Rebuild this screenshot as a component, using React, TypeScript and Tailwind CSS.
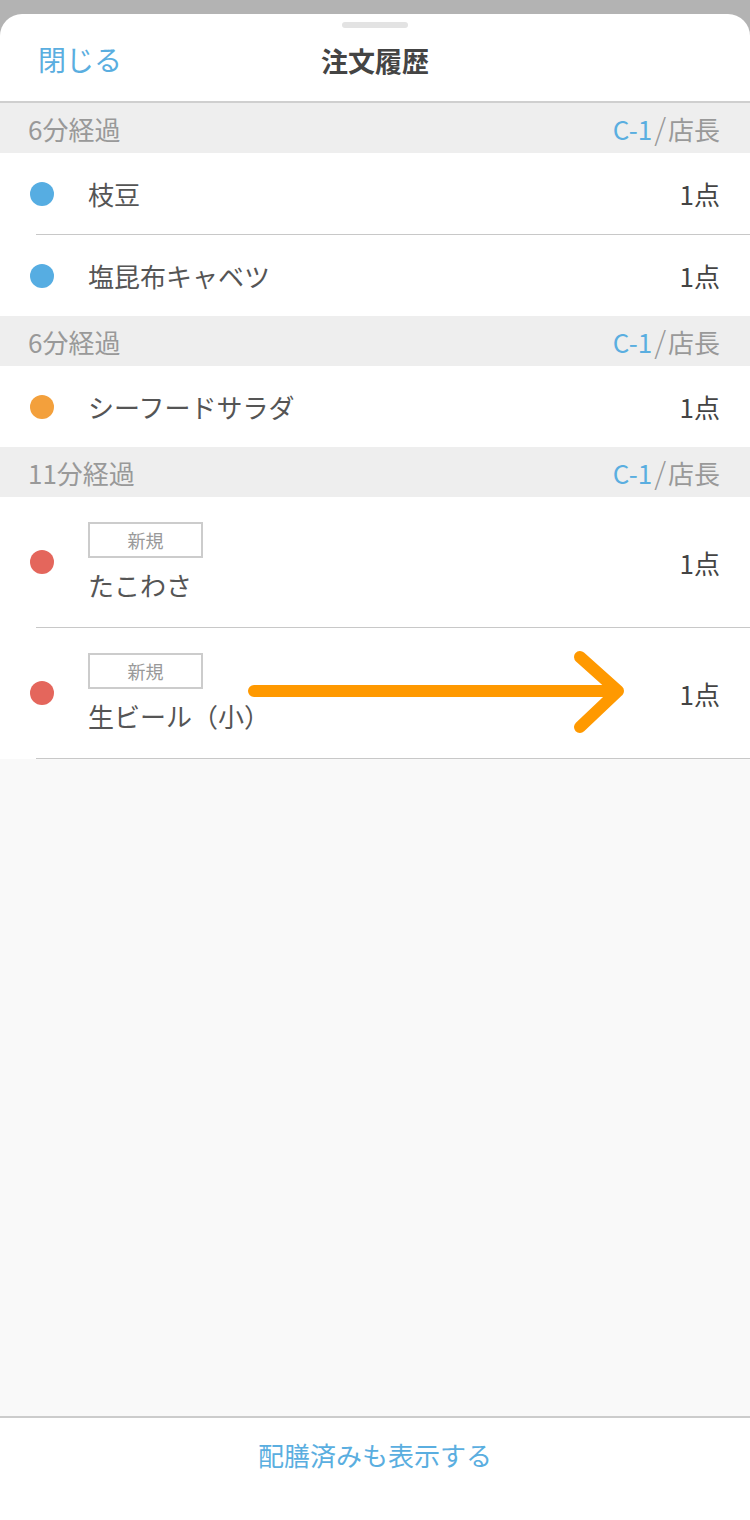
import React from 'react';

type Item = {
  name: string;
  color: string;
  isNew?: boolean;
  qty: string;
};

type Section = {
  elapsed: string;
  table: string;
  staff: string;
  items: Item[];
};

const sections: Section[] = [
  {
    elapsed: '6分経過',
    table: 'C-1',
    staff: '店長',
    items: [
      { name: '枝豆', color: 'bg-[#56ade2]', qty: '1点' },
      { name: '塩昆布キャベツ', color: 'bg-[#56ade2]', qty: '1点' },
    ],
  },
  {
    elapsed: '6分経過',
    table: 'C-1',
    staff: '店長',
    items: [{ name: 'シーフードサラダ', color: 'bg-[#f3a03c]', qty: '1点' }],
  },
  {
    elapsed: '11分経過',
    table: 'C-1',
    staff: '店長',
    items: [
      { name: 'たこわさ', color: 'bg-[#e4665c]', isNew: true, qty: '1点' },
      { name: '生ビール（小）', color: 'bg-[#e4665c]', isNew: true, qty: '1点' },
    ],
  },
];

const SectionHeader = ({ s }: { s: Section }) => (
  <div className="flex h-[50px] items-center justify-between bg-[#eeeeee] pl-[28px] pr-[30px]">
    <span className="text-[26px] text-[#999999]">{s.elapsed}</span>
    <span className="flex items-center text-[26px]">
      <span className="text-[#5aaee0]">{s.table}</span>
      <span className="mx-[2px] text-[30px] font-light text-[#999999]">/</span>
      <span className="text-[#999999]">{s.staff}</span>
    </span>
  </div>
);

const Row = ({ item }: { item: Item }) => (
  <div className={`flex items-center justify-between pl-[30px] pr-[30px] ${item.isNew ? 'h-[130px]' : 'h-[81px]'}`}>
    <div className="flex items-center">
      <span className={`h-[24px] w-[24px] rounded-full ${item.color}`} />
      <div className="ml-[34px] flex flex-col">
        {item.isNew && (
          <span className="mb-[10px] flex h-[36px] w-[115px] items-center justify-center border-2 border-[#cccccc] text-[18px] text-[#999999]">
            新規
          </span>
        )}
        <span className="text-[26px] leading-[34px] text-[#555555]">{item.name}</span>
      </div>
    </div>
    <span className="text-[26px] text-[#444444]">{item.qty}</span>
  </div>
);

export default function App() {
  return (
    <div
      className="relative flex h-[1520px] w-[750px] flex-col bg-[#b3b3b3]"
      style={{ fontFamily: '"Noto Sans CJK JP", "Noto Sans", sans-serif' }}
    >
      <div className="mt-[14px] flex flex-1 flex-col overflow-hidden rounded-t-[22px] bg-white">
        <div className="relative flex h-[89px] items-center justify-center border-b-2 border-[#cfcfcf]">
          <span className="absolute left-1/2 top-[8px] h-[6px] w-[66px] -translate-x-1/2 rounded-full bg-[#e3e3e3]" />
          <button className="absolute left-[38px] top-[31px] text-[28px] leading-none text-[#5aaee0]">閉じる</button>
          <h1 className="mt-[8px] text-[27px] font-bold text-[#444444]">注文履歴</h1>
        </div>

        <div className="flex flex-col">
          {sections.map((s, si) => (
            <div key={si} className="flex flex-col">
              <SectionHeader s={s} />
              {s.items.map((item, ii) => {
                const last = ii === s.items.length - 1;
                const showLine = !last || si === sections.length - 1;
                return (
                  <div key={ii} className="flex flex-col">
                    <Row item={item} />
                    {showLine && (
                      <div className="flex bg-white">
                        <div className="ml-[36px] h-px flex-1 bg-[#c8c8c8]" />
                      </div>
                    )}
                  </div>
                );
              })}
            </div>
          ))}
        </div>

        <div className="flex-1 bg-[#f9f9f9]" />

        <div className="flex h-[104px] items-center justify-center border-t-2 border-[#cccccc] bg-white pb-[30px]">
          <span className="text-[26px] text-[#5aaee0]">配膳済みも表示する</span>
        </div>
      </div>

      <svg
        className="absolute left-[240px] top-[645px]"
        width="400"
        height="95"
        viewBox="0 0 400 95"
        fill="none"
      >
        <path
          d="M14 46 H378 M340 12 L378 46 L340 82"
          stroke="#ff9900"
          strokeWidth="12"
          strokeLinecap="round"
          strokeLinejoin="round"
        />
      </svg>
    </div>
  );
}
